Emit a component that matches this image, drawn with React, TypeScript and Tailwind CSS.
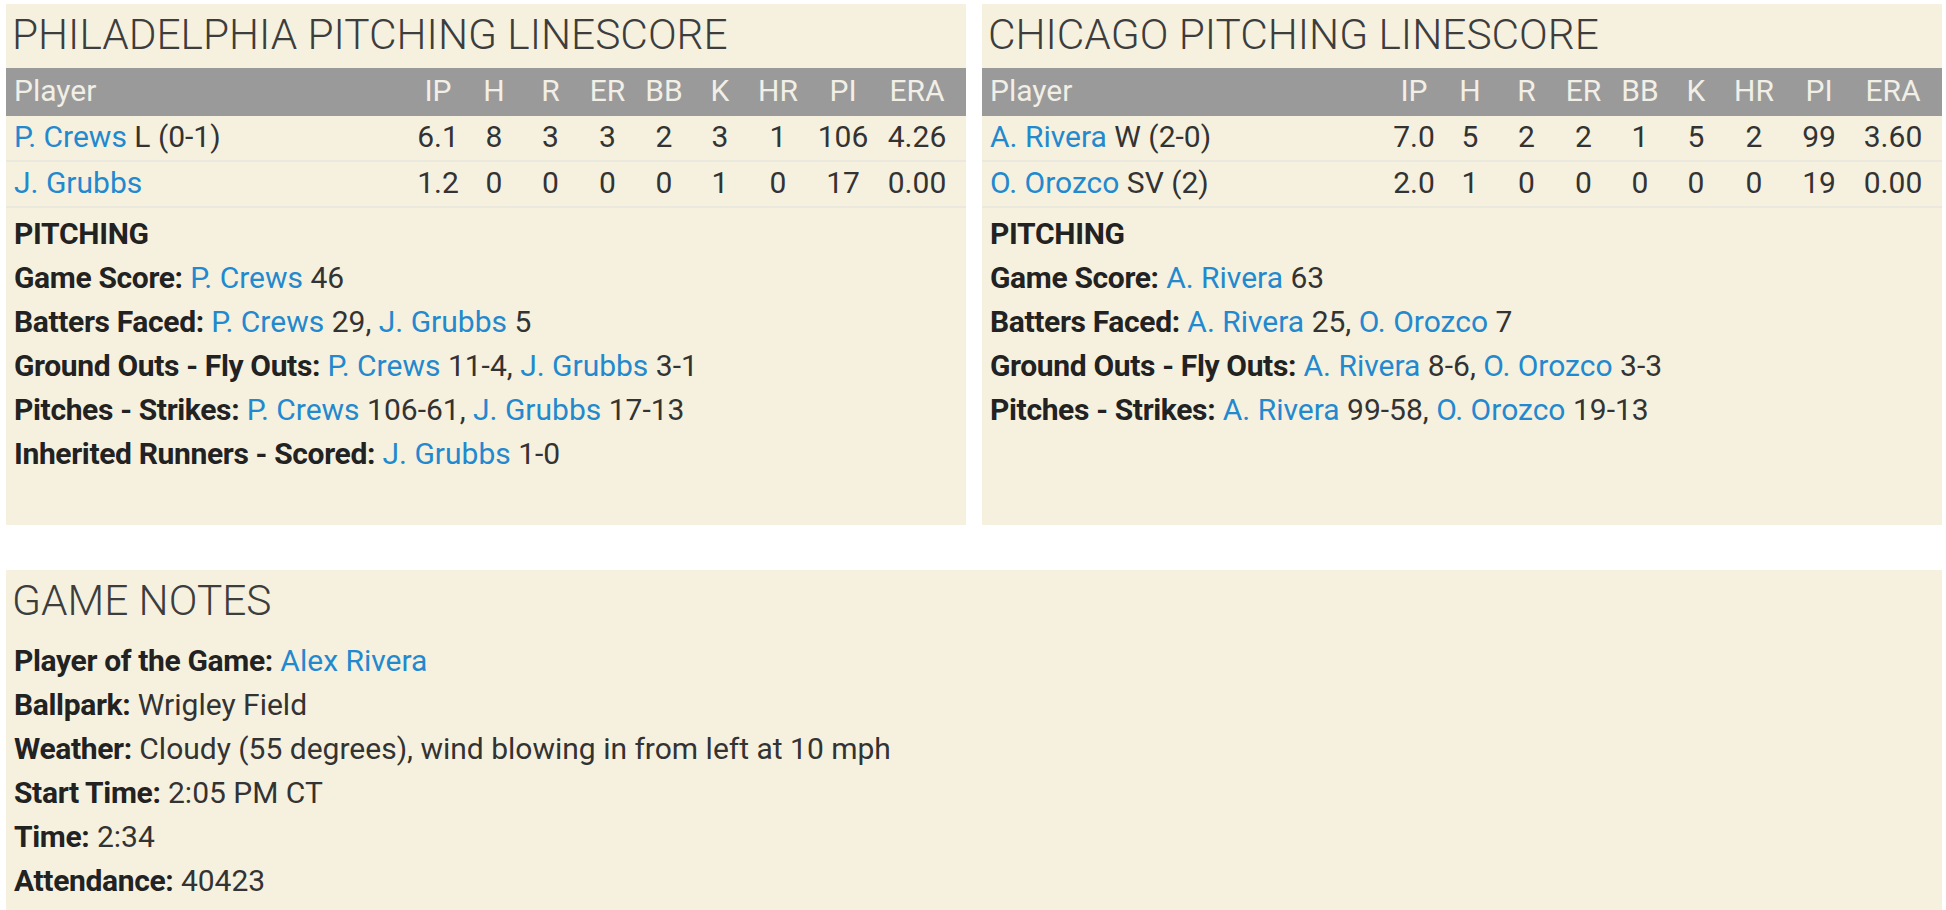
import React from 'react';

type Pitcher = { name: string; note?: string; stats: string[] };
type Part = { label: string; items: { name: string; value: string }[] };

const cols = [
  { key: 'IP', w: 'w-[56px]' },
  { key: 'H', w: 'w-[56px]' },
  { key: 'R', w: 'w-[57px]' },
  { key: 'ER', w: 'w-[57px]' },
  { key: 'BB', w: 'w-[56px]' },
  { key: 'K', w: 'w-[56px]' },
  { key: 'HR', w: 'w-[60px]' },
  { key: 'PI', w: 'w-[70px]' },
  { key: 'ERA', w: 'w-[78px]' },
];

const Link = ({ children }: { children: React.ReactNode }) => (
  <a className="text-[#2389cf] font-normal tracking-normal">{children}</a>
);

function Linescore({ team, pitchers, lines }: { team: string; pitchers: Pitcher[]; lines: Part[] }) {
  return (
    <div className="bg-[#f6f1df] pb-[49px]">
      <div className="h-[64px] pl-[6px] text-[42.4px] leading-[62px] font-light text-[#3d3d3d]">
        {team} PITCHING LINESCORE
      </div>

      {/* header */}
      <div className="flex items-center h-[48px] pb-[4px] bg-[#9a9a9a] text-[#f1efe6] pl-[8px] pr-[10px]">
        <div className="flex-1">Player</div>
        {cols.map(c => (
          <div key={c.key} className={`${c.w} text-center`}>{c.key}</div>
        ))}
      </div>

      {pitchers.map(p => (
        <div key={p.name} className="flex items-center h-[46px] pb-[4px] border-b-2 border-[#ebe8de] pl-[8px] pr-[10px] text-[#333]">
          <div className="flex-1">
            <Link>{p.name}</Link>
            {p.note ? <span> {p.note}</span> : null}
          </div>
          {p.stats.map((s, i) => (
            <div key={i} className={`${cols[i].w} text-center`}>{s}</div>
          ))}
        </div>
      ))}

      <div className="mt-[4px] pl-[8px] leading-[44px] text-[#333]">
        <div className="font-bold text-[#222] tracking-[-0.3px]">PITCHING</div>
        {lines.map(l => (
          <div key={l.label}>
            <span className="font-bold text-[#222] tracking-[-0.35px]">{l.label}:</span>{' '}
            {l.items.map((it, i) => (
              <span key={i}>
                <Link>{it.name}</Link> {it.value}
                {i < l.items.length - 1 ? ', ' : ''}
              </span>
            ))}
          </div>
        ))}
      </div>
    </div>
  );
}

export default function App() {
  const phi: Pitcher[] = [
    { name: 'P. Crews', note: 'L (0-1)', stats: ['6.1', '8', '3', '3', '2', '3', '1', '106', '4.26'] },
    { name: 'J. Grubbs', stats: ['1.2', '0', '0', '0', '0', '1', '0', '17', '0.00'] },
  ];
  const chc: Pitcher[] = [
    { name: 'A. Rivera', note: 'W (2-0)', stats: ['7.0', '5', '2', '2', '1', '5', '2', '99', '3.60'] },
    { name: 'O. Orozco', note: 'SV (2)', stats: ['2.0', '1', '0', '0', '0', '0', '0', '19', '0.00'] },
  ];
  const phiLines: Part[] = [
    { label: 'Game Score', items: [{ name: 'P. Crews', value: '46' }] },
    { label: 'Batters Faced', items: [{ name: 'P. Crews', value: '29' }, { name: 'J. Grubbs', value: '5' }] },
    { label: 'Ground Outs - Fly Outs', items: [{ name: 'P. Crews', value: '11-4' }, { name: 'J. Grubbs', value: '3-1' }] },
    { label: 'Pitches - Strikes', items: [{ name: 'P. Crews', value: '106-61' }, { name: 'J. Grubbs', value: '17-13' }] },
    { label: 'Inherited Runners - Scored', items: [{ name: 'J. Grubbs', value: '1-0' }] },
  ];
  const chcLines: Part[] = [
    { label: 'Game Score', items: [{ name: 'A. Rivera', value: '63' }] },
    { label: 'Batters Faced', items: [{ name: 'A. Rivera', value: '25' }, { name: 'O. Orozco', value: '7' }] },
    { label: 'Ground Outs - Fly Outs', items: [{ name: 'A. Rivera', value: '8-6' }, { name: 'O. Orozco', value: '3-3' }] },
    { label: 'Pitches - Strikes', items: [{ name: 'A. Rivera', value: '99-58' }, { name: 'O. Orozco', value: '19-13' }] },
  ];

  const notes = [
    { label: 'Player of the Game', link: 'Alex Rivera' },
    { label: 'Ballpark', value: 'Wrigley Field' },
    { label: 'Weather', value: 'Cloudy (55 degrees), wind blowing in from left at 10 mph' },
    { label: 'Start Time', value: '2:05 PM CT' },
    { label: 'Time', value: '2:34' },
    { label: 'Attendance', value: '40423' },
  ];

  return (
    <div className="min-h-screen bg-white pt-[4px] pl-[6px] pr-[4px] text-[30px] font-['Roboto',_'Liberation_Sans',_sans-serif]">
      <div className="grid grid-cols-2 gap-[16px]">
        <Linescore team="PHILADELPHIA" pitchers={phi} lines={phiLines} />
        <Linescore team="CHICAGO" pitchers={chc} lines={chcLines} />
      </div>

      <div className="mt-[45px] bg-[#f6f1df] pb-[20px]">
        <div className="h-[64px] pl-[6px] text-[42.4px] leading-[62px] font-light text-[#3d3d3d]">GAME NOTES</div>
        <div className="mt-[5px] pl-[8px] leading-[44px] text-[#333]">
          {notes.map(n => (
            <div key={n.label}>
              <span className="font-bold text-[#222] tracking-[-0.35px]">{n.label}:</span>{' '}
              {n.link ? <Link>{n.link}</Link> : n.value}
            </div>
          ))}
        </div>
      </div>
    </div>
  );
}
